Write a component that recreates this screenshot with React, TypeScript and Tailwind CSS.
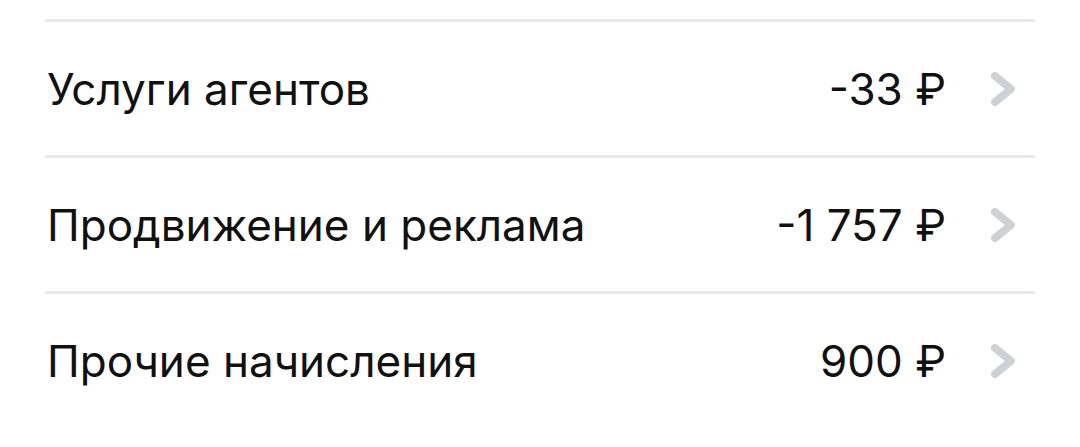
const rows = [
  { label: 'Услуги агентов', amount: '-33 ₽' },
  { label: 'Продвижение и реклама', amount: '-1 757 ₽' },
  { label: 'Прочие начисления', amount: '900 ₽' },
];

function Chevron() {
  return (
    <svg width="28" height="36" viewBox="0 0 28 36" fill="none" className="shrink-0">
      <path
        d="M5 5 L21 18 L5 31"
        stroke="#cdd2d7"
        strokeWidth="8"
        strokeLinecap="round"
        strokeLinejoin="round"
      />
    </svg>
  );
}

export default function App() {
  return (
    <div className="min-h-screen bg-white pt-[19px] px-[45px]" style={{ fontFamily: 'Inter, "Noto Sans", sans-serif' }}>
      {rows.map((row) => (
        <div key={row.label} className="border-t-[3px] border-[#e5e8ed]">
          <div className="flex h-[133px] items-center pl-[2px] pr-[17px] text-[44px] leading-none text-[#111111]">
            <span className="flex-1">{row.label}</span>
            <span>{row.amount}</span>
            <div className="ml-[44px]">
              <Chevron />
            </div>
          </div>
        </div>
      ))}
    </div>
  );
}
